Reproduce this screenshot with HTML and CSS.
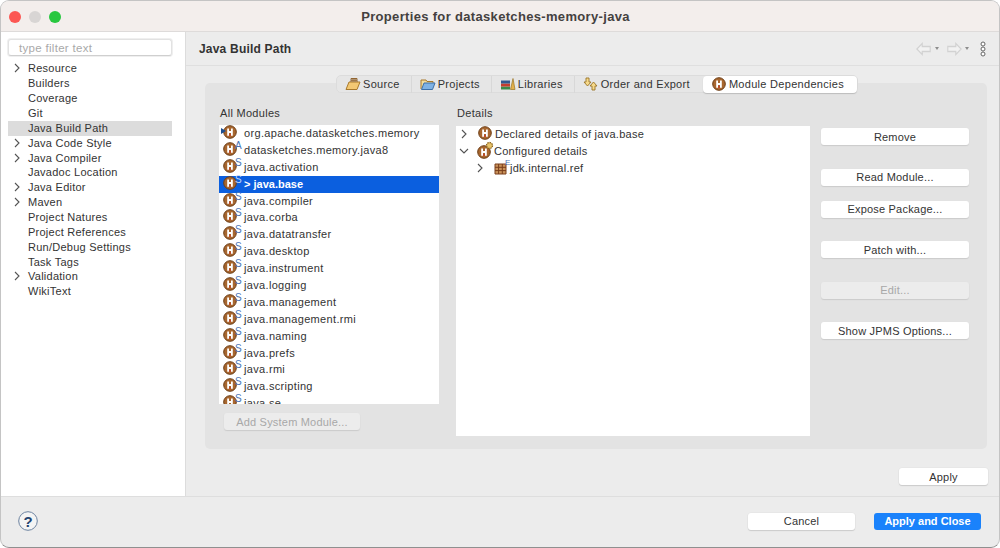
FILE: index.html
```html
<!DOCTYPE html>
<html lang="en">
<head>
  <meta charset="UTF-8" />
  <title>Properties for datasketches-memory-java</title>
  <link rel="stylesheet" href="styles.css">
</head>
<body>
  <svg class="defs" width="0" height="0">
    <defs>
      <symbol id="mod" viewBox="0 0 14 14">
        <circle cx="7" cy="7" r="6.300" fill="#a8672f" stroke="#6b3c15" stroke-width="1"/>
        <path d="M4.200 3.600H6v2.300h2V3.600h1.800V10.800H8V8.100H6v2.700H4.200z" fill="#fff"/>
        <path d="M6 9h2v1.800H6z" fill="#c2452a"/>
      </symbol>
      <symbol id="chev-r" viewBox="0 0 8 10"><path d="M2 1l4 4-4 4" fill="none" stroke="#555" stroke-width="1.100"/></symbol>
      <symbol id="chev-d" viewBox="0 0 10 8"><path d="M1 2l4 4 4-4" fill="none" stroke="#555" stroke-width="1.100"/></symbol>
    </defs>
  </svg>

  <div class="window">
    <div class="titlebar">
      <span class="light red"></span>
      <span class="light grey"></span>
      <span class="light green"></span>
      <div class="title">Properties for datasketches-memory-java</div>
    </div>

    <div class="main">
      <div class="sidebar">
        <div class="filter">type filter text</div>
        <ul class="nav">
          <li><svg class="chev"><use href="#chev-r"/></svg>Resource</li>
          <li>Builders</li>
          <li>Coverage</li>
          <li>Git</li>
          <li class="on">Java Build Path</li>
          <li><svg class="chev"><use href="#chev-r"/></svg>Java Code Style</li>
          <li><svg class="chev"><use href="#chev-r"/></svg>Java Compiler</li>
          <li>Javadoc Location</li>
          <li><svg class="chev"><use href="#chev-r"/></svg>Java Editor</li>
          <li><svg class="chev"><use href="#chev-r"/></svg>Maven</li>
          <li>Project Natures</li>
          <li>Project References</li>
          <li>Run/Debug Settings</li>
          <li>Task Tags</li>
          <li><svg class="chev"><use href="#chev-r"/></svg>Validation</li>
          <li>WikiText</li>
        </ul>
      </div>

      <div class="content">
        <div class="head">
          <h1>Java Build Path</h1>
          <div class="tools">
            <svg width="16" height="14" viewBox="1 0 18 14" preserveAspectRatio="none"><path d="M8 1.500L2 7l6 5.500V9.500h9v-5H8z" fill="#f2f2f2" stroke="#d2d2d2" stroke-width="1.300"/></svg>
            <span class="drop"></span>
            <svg width="16" height="14" viewBox="1 0 18 14" preserveAspectRatio="none"><path d="M12 1.500L18 7l-6 5.500V9.500H3v-5h9z" fill="#f2f2f2" stroke="#d2d2d2" stroke-width="1.300"/></svg>
            <span class="drop"></span>
            <svg class="kebab" width="8" height="16" viewBox="0 0 8 16"><g fill="#fff" stroke="#666" stroke-width="1"><circle cx="4" cy="3" r="2"/><circle cx="4" cy="8" r="2"/><circle cx="4" cy="13" r="2"/></g></svg>
          </div>
        </div>

        <div class="body">
          <div class="tabs">
            <div class="tab">
              <svg width="16" height="14" viewBox="0 0 16 14"><path d="M1 12.500L4 5h11l-3 7.500z" fill="#f3c873" stroke="#a8792c"/><path d="M6 5V1.500h6V5M8 1.500V5M10 1.500V5M6 3.200h6" fill="none" stroke="#8a5a22" stroke-width="0.900"/></svg>
              Source
            </div>
            <div class="tab">
              <svg width="16" height="14" viewBox="0 0 16 14"><path d="M1 12V3h5l1 1.500h6V6" fill="#f3dc9c" stroke="#a8792c"/><path d="M1.500 12.500L4 6h11l-2.500 6.500z" fill="#7fb2e5" stroke="#3d6fa8"/></svg>
              Projects
            </div>
            <div class="tab">
              <svg width="16" height="14" viewBox="0 0 16 14"><rect x="1" y="9.500" width="9" height="3" fill="#3c8a4a"/><rect x="1" y="6.500" width="9" height="3" fill="#c43d2f"/><rect x="1" y="3.500" width="9" height="3" fill="#31598f"/><path d="M10.500 12.500L13 1.500l2 11z" fill="#e3b14d" stroke="#9a7426" stroke-width="0.700"/></svg>
              Libraries
            </div>
            <div class="tab">
              <svg width="16" height="14" viewBox="0 0 16 14"><path d="M3 1h3v4h2L4.500 9 1 5h2z" fill="#f6d98a" stroke="#9a7426" stroke-width="0.900"/><path d="M12 13H9V9H7l3.500-4L14 9h-2z" fill="#f6d98a" stroke="#9a7426" stroke-width="0.900"/></svg>
              Order and Export
            </div>
            <div class="tab active">
              <svg width="14" height="14"><use href="#mod"/></svg>
              Module Dependencies
            </div>
          </div>

          <div class="cols">
            <div class="col-modules">
              <div class="label">All Modules</div>
              <ul class="modules">
                <li><span class="ic"><svg width="14" height="14"><use href="#mod"/></svg><i class="arrow"></i></span>org.apache.datasketches.memory</li>
                <li><span class="ic"><svg width="14" height="14"><use href="#mod"/></svg><b>A</b></span>datasketches.memory.java8</li>
                <li><span class="ic"><svg width="14" height="14"><use href="#mod"/></svg><b>S</b></span>java.activation</li>
                <li class="on"><span class="ic"><svg width="14" height="14"><use href="#mod"/></svg><b>S</b></span>&gt; java.base</li>
                <li><span class="ic"><svg width="14" height="14"><use href="#mod"/></svg><b>S</b></span>java.compiler</li>
                <li><span class="ic"><svg width="14" height="14"><use href="#mod"/></svg><b>S</b></span>java.corba</li>
                <li><span class="ic"><svg width="14" height="14"><use href="#mod"/></svg><b>S</b></span>java.datatransfer</li>
                <li><span class="ic"><svg width="14" height="14"><use href="#mod"/></svg><b>S</b></span>java.desktop</li>
                <li><span class="ic"><svg width="14" height="14"><use href="#mod"/></svg><b>S</b></span>java.instrument</li>
                <li><span class="ic"><svg width="14" height="14"><use href="#mod"/></svg><b>S</b></span>java.logging</li>
                <li><span class="ic"><svg width="14" height="14"><use href="#mod"/></svg><b>S</b></span>java.management</li>
                <li><span class="ic"><svg width="14" height="14"><use href="#mod"/></svg><b>S</b></span>java.management.rmi</li>
                <li><span class="ic"><svg width="14" height="14"><use href="#mod"/></svg><b>S</b></span>java.naming</li>
                <li><span class="ic"><svg width="14" height="14"><use href="#mod"/></svg><b>S</b></span>java.prefs</li>
                <li><span class="ic"><svg width="14" height="14"><use href="#mod"/></svg><b>S</b></span>java.rmi</li>
                <li><span class="ic"><svg width="14" height="14"><use href="#mod"/></svg><b>S</b></span>java.scripting</li>
                <li><span class="ic"><svg width="14" height="14"><use href="#mod"/></svg><b>S</b></span>java.se</li>
              </ul>
              <button class="btn add" disabled>Add System Module...</button>
            </div>

            <div class="col-details">
              <div class="label">Details</div>
              <div class="tree">
                <div class="node"><svg class="tw"><use href="#chev-r"/></svg><span class="plain"><svg width="14" height="14"><use href="#mod"/></svg></span>Declared details of java.base</div>
                <div class="node"><svg class="tw"><use href="#chev-d"/></svg><span class="cfg"><svg width="14" height="14"><use href="#mod"/></svg><svg class="gear" width="9" height="9" viewBox="0 0 9 9"><circle cx="4.500" cy="4.500" r="3" fill="#e9c46a" stroke="#8a6420" stroke-width="1.300" stroke-dasharray="1.500 0.800"/></svg></span>Configured details</div>
                <div class="node sub"><svg class="tw"><use href="#chev-r"/></svg><span class="pkg"><svg width="13" height="13" viewBox="0 0 13 13"><rect x="1" y="2" width="11" height="10" fill="#c9925a"/><path d="M1 2h11v10H1zM1 5.300h11M1 8.600h11M4.600 2v10M8.300 2v10" fill="none" stroke="#7a3e1c" stroke-width="1"/></svg><b>E</b></span>jdk.internal.ref</div>
              </div>
            </div>

            <div class="col-actions">
              <button class="btn">Remove</button>
              <button class="btn wide">Read Module...</button>
              <button class="btn narrow">Expose Package...</button>
              <button class="btn wide">Patch with...</button>
              <button class="btn wide" disabled>Edit...</button>
              <button class="btn wide">Show JPMS Options...</button>
            </div>
          </div>
        </div>

        <div class="apply-row"><button class="btn apply">Apply</button></div>
      </div>
    </div>

    <div class="footer">
      <svg class="help" width="20" height="20" viewBox="0 0 20 20"><circle cx="10" cy="10" r="9.300" fill="#f4f4f4" stroke="#6d83a0" stroke-width="1"/></svg>
      <span class="help-mark">?</span>
      <div class="footer-btns">
        <button class="btn cancel">Cancel</button>
        <button class="btn primary">Apply and Close</button>
      </div>
    </div>
  </div>
</body>
</html>
```

FILE: styles.css
```css
* { box-sizing: border-box; }

html, body {
  margin: 0;
  height: 100%;
  background: #fff;
}

body {
  font-family: "Liberation Sans", Arial, sans-serif;
  font-size: 11px;
  color: #2b2b2b;
  overflow: hidden;
}

.defs { position: absolute; }

.window {
  width: 1000px;
  height: 548px;
  display: flex;
  flex-direction: column;
  background: #ececec;
  border: 1px solid #c4c4c4;
  border-bottom-color: #8f8f8f;
  border-radius: 9px;
  overflow: hidden;
}

/* title bar */
.titlebar {
  height: 31px;
  flex: none;
  position: relative;
  display: flex;
  align-items: center;
  gap: 8px;
  padding: 1px 0 0 8px;
  background: #f3eeec;
  border-bottom: 1px solid #dedbda;
}

.light {
  width: 12px;
  height: 12px;
  border-radius: 50%;
}
.light.red { background: #fc5753; }
.light.grey { background: #d8d5d4; }
.light.green { background: #28c73f; }

.title {
  position: absolute;
  left: 0;
  right: 9px;
  text-align: center;
  font-size: 13px;
  font-weight: bold;
  color: #44413f;
  letter-spacing: 0.33px;
}

.main {
  flex: 1;
  display: flex;
  min-height: 0;
}

/* left tree */
.sidebar {
  width: 185px;
  flex: none;
  background: #fff;
  padding: 7px 13px 0 7px;
  border-right: 1px solid #dcdcdc;
}

.filter {
  height: 17px;
  line-height: 16px;
  padding-left: 10px;
  font-size: 11.500px;
  color: #a9a9a9;
  letter-spacing: 0.3px;
  background: #fff;
  border: 1px solid #e2e2e2;
  border-bottom-color: #cfcfcf;
  border-radius: 3px;
  box-shadow: 0 0 0 1px #efefef;
}

.nav {
  list-style: none;
  margin: 5.400px 0 0;
  padding: 0;
}

.nav li {
  position: relative;
  height: 14.870px;
  line-height: 15px;
  padding-left: 20px;
  letter-spacing: 0.25px;
  color: #333;
}

.nav li.on { background: #dcdcdc; }

.chev {
  position: absolute;
  left: 5px;
  top: 2px;
  width: 8px;
  height: 10px;
}

/* right side */
.content {
  flex: 1;
  min-width: 0;
  display: flex;
  flex-direction: column;
}

.head {
  height: 34px;
  flex: none;
  display: flex;
  align-items: center;
  justify-content: space-between;
  padding: 0 12px 0 13px;
  border-bottom: 1px solid #dfdfdf;
}

.head h1 {
  margin: 0;
  font-size: 12px;
  font-weight: bold;
  color: #333;
  letter-spacing: 0.2px;
}

.tools {
  display: flex;
  align-items: center;
  gap: 3px;
}

.drop {
  width: 0;
  height: 0;
  border-left: 2.500px solid transparent;
  border-right: 2.500px solid transparent;
  border-top: 3px solid #8d8d8d;
  margin-right: 4px;
}

.kebab { margin-left: 3px; }

.body {
  margin: 17px 12px 0 19px;
  height: 366px;
  flex: none;
  background: #e3e3e3;
  border-radius: 5px;
  position: relative;
  padding: 0 18px 0 14px;
}

.tabs {
  position: absolute;
  top: -8px;
  left: 131px;
  height: 18px;
  display: flex;
  align-items: center;
  background: #e6e6e6;
  border: 1px solid #dcdcdc;
  border-radius: 5px;
}

.tab {
  height: 17px;
  display: flex;
  align-items: center;
  gap: 2px;
  padding: 0 11px 0 8px;
  white-space: nowrap;
  letter-spacing: 0.3px;
  color: #333;
}

.tab + .tab { border-left: 1px solid #d8d8d8; }
.tab svg { flex: none; }

.tab.active {
  margin-left: 2px;
  background: #fff;
  border: none;
  border-radius: 4px;
  box-shadow: 0 1px 1px #bcbcbc;
  padding: 0 13px 0 9px;
  gap: 3px;
}

.cols {
  display: flex;
  padding-top: 24px;
}

.label {
  height: 18px;
  line-height: 13px;
  padding-left: 1px;
  letter-spacing: 0.3px;
  color: #333;
}

.col-modules { width: 220px; flex: none; }
.col-details { width: 354px; flex: none; margin-left: 17px; }
.col-actions {
  width: 148px;
  flex: none;
  margin-left: 11px;
  padding-top: 21px;
  display: flex;
  flex-direction: column;
}

.modules {
  list-style: none;
  margin: 0;
  padding: 0;
  height: 279px;
  background: #fff;
  overflow: hidden;
}

.modules li {
  height: 16.900px;
  line-height: 17px;
  display: flex;
  align-items: center;
  letter-spacing: 0.33px;
  white-space: nowrap;
  color: #333;
}

.modules li.on {
  background: #0b5fdf;
  color: #fff;
  font-weight: bold;
  letter-spacing: 0;
}

.ic {
  position: relative;
  width: 24px;
  height: 14px;
  flex: none;
  margin: -3px -2px 0 3px;
  display: block;
}

.ic svg { display: block; margin-left: 1px; }

.ic b, .pkg b {
  position: absolute;
  left: 13px;
  top: -1px;
  font-size: 10px;
  line-height: 10px;
  font-weight: normal;
  color: #4a75b5;
}

.on .ic b { color: #bcd4f7; }

.arrow {
  position: absolute;
  left: -1px;
  top: 3px;
  width: 0;
  height: 0;
  border-left: 5px solid #1d4f91;
  border-top: 3.500px solid transparent;
  border-bottom: 3.500px solid transparent;
}

.tree {
  height: 310px;
  background: #fff;
  margin-top: 1px;
}

.node {
  height: 16.900px;
  display: flex;
  align-items: center;
  letter-spacing: 0.27px;
  color: #333;
  white-space: nowrap;
}

.node.sub { padding-left: 16px; }

.plain {
  width: 17px;
  height: 14px;
  margin-top: -2px;
  display: block;
}

.tw {
  width: 10px;
  height: 10px;
  margin: 0 9px 0 3px;
  flex: none;
}

.node.sub .tw { margin-right: 9px; }

.cfg {
  position: relative;
  width: 17px;
  height: 14px;
  margin: 1px 0 0 -1px;
  display: block;
}
.cfg .gear { position: absolute; left: 8px; top: -4px; }

.pkg {
  position: relative;
  width: 16px;
  height: 13px;
  display: block;
}
.pkg b { left: 11px; top: -4px; font-size: 8px; }

/* buttons */
.btn {
  display: block;
  height: 17px;
  width: 148px;
  flex: none;
  padding: 0;
  font-family: inherit;
  font-size: 11px;
  letter-spacing: 0.2px;
  color: #333;
  background: #fff;
  border: none;
  border-radius: 3px;
  box-shadow: 0 1px 1px #cbcbcb, 0 0 0 0.5px #e2e2e2;
}

.btn:disabled {
  background: #ececec;
  color: #a8a8a8;
}

.col-actions .wide { margin-top: 23.600px; }
.col-actions .narrow { margin-top: 15px; }

.btn.add {
  width: 136px;
  margin: 9px 0 0 5px;
}

.apply-row {
  display: flex;
  justify-content: flex-end;
  padding: 19px 11px 0 0;
}

.btn.apply { width: 89px; }

/* bottom bar */
.footer {
  height: 51px;
  flex: none;
  position: relative;
  display: flex;
  align-items: center;
  justify-content: space-between;
  padding: 0 18px 2px 17px;
  border-top: 1px solid #dedede;
}

.help-mark {
  position: absolute;
  left: 17px;
  width: 20px;
  text-align: center;
  font-size: 15px;
  font-weight: bold;
  color: #24436f;
}

.footer-btns {
  display: flex;
  gap: 19px;
}

.btn.cancel, .btn.primary { width: 107px; }

.btn.primary {
  background: #1a82fb;
  color: #fff;
  font-weight: bold;
  letter-spacing: 0;
  box-shadow: none;
}
```
